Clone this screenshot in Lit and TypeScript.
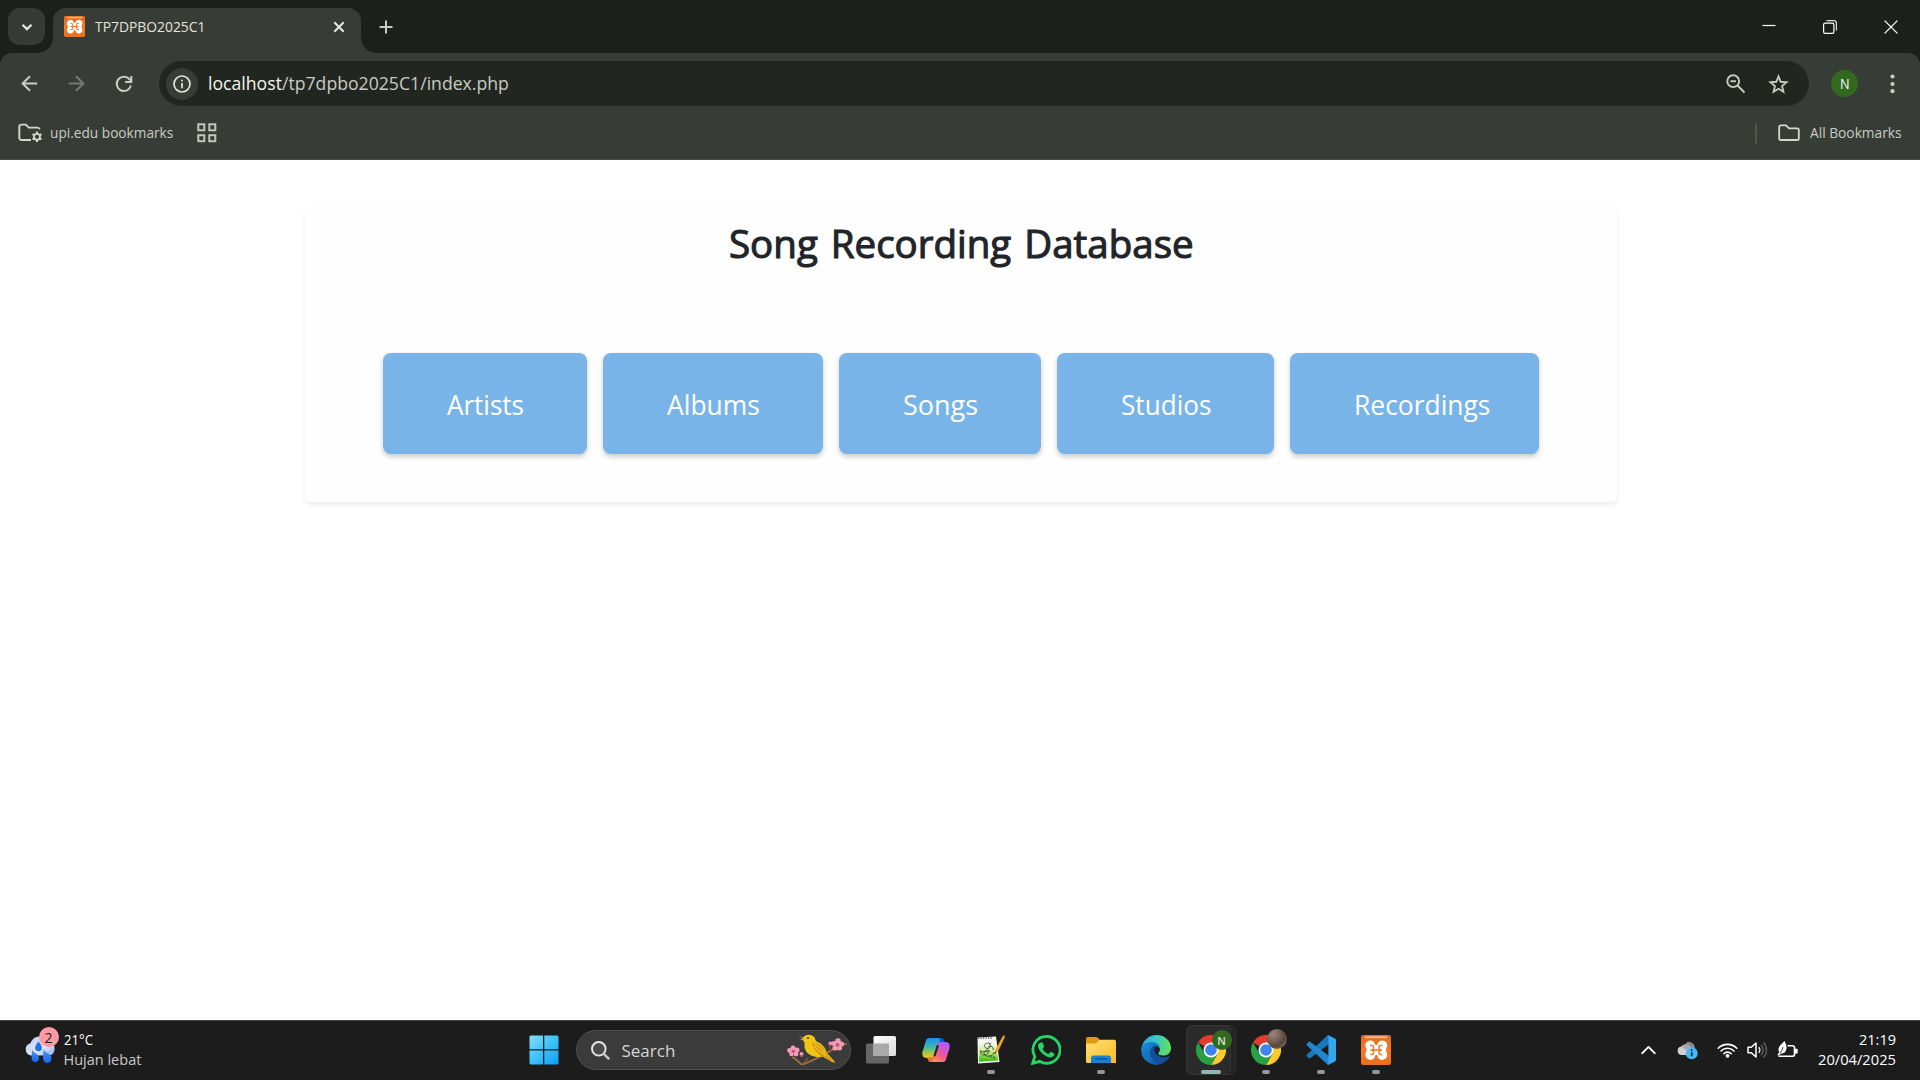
import { LitElement, html, svg, css } from "lit";
import { customElement, property } from "lit/decorators.js";

/* Single-line label condensed or widened to an exact text width. */
@customElement("fit-label")
class FitLabel extends LitElement {
  @property({ type: Number }) w = 0;
  static styles = css`
    :host { display: inline-block; flex: none; white-space: nowrap; overflow: visible; }
    .t { display: inline-block; transform-origin: 0 50%; white-space: nowrap; }
  `;
  async firstUpdated() {
    this.fit();
    await document.fonts.ready;
    this.fit();
  }
  fit() {
    const t = this.renderRoot.querySelector(".t") as HTMLElement;
    this.style.width = this.w + "px";
    t.style.transform = `scaleX(${this.w / t.offsetWidth})`;
  }
  render() {
    return html`<span class="t"><slot></slot></span>`;
  }
}

const icon = (w: number, h: number, body: unknown, vb = `0 0 ${w} ${h}`) =>
  html`<svg width=${w} height=${h} viewBox=${vb} fill="none">${body}</svg>`;

const xampp = (size: number) => icon(size, size, svg`
  <defs><linearGradient id="xo" x1="0" y1="0" x2="0" y2="1"><stop stop-color="#e0681c"/><stop offset=".5" stop-color="#f47b24"/><stop offset="1" stop-color="#e8701d"/></linearGradient></defs>
  <rect width="30" height="30" rx="2" fill="url(#xo)"/>
  <rect x="3.5" y="1.2" width="23" height="2" rx="1" fill="#f9b88a"/>
  <g stroke-linecap="round" stroke-linejoin="round">
    <path d="M9.200 10.300 11 15 9.200 20M21.300 10.300 19.500 15 21.300 20M11 15h8.500" stroke="#fff" stroke-width="9.800"/>
    <path d="M9.800 10.600h1.400q1.300 0 1.300 1.500v1.400q0 1.500-2.500 1.500 2.500 0 2.500 1.500v1.400q0 1.500-1.300 1.500H9.800M20.700 10.600h-1.400q-1.300 0-1.300 1.500v1.400q0 1.500 2.500 1.500-2.500 0-2.500 1.500v1.400q0 1.500 1.300 1.500h1.400M12.500 15H18" stroke="#f27a25" stroke-width="1.500"/>
  </g>`, "0 0 30 30");

const chrome = icon(30, 30, svg`
  <path d="M15 15 2 7.500A15 15 0 0 1 28 7.500Z" fill="#e33b2e"/>
  <path d="M15 7.500H28A15 15 0 0 1 15 30L21.500 18.750Z" fill="#fdc92c"/>
  <path d="M8.500 18.750 2 7.500A15 15 0 0 0 15 30L21.500 18.750 15 20Z" fill="#27a146"/>
  <circle cx="15" cy="15" r="7.500" fill="#fff"/><circle cx="15" cy="15" r="5.800" fill="#3f83ef"/>`);

const I = {
  chevDown: icon(12, 8, svg`<path d="m1.500 1.700 4.500 4.400 4.500-4.400" stroke="#e6e9e0" stroke-width="2.200"/>`),
  closeTab: icon(12, 12, svg`<path d="m1.300 1.300 9.400 9.400m0-9.400-9.400 9.400" stroke="#e6e9e0" stroke-width="2"/>`),
  plus: icon(14, 14, svg`<path d="M7 .5v13M.5 7h13" stroke="#c8cbc2" stroke-width="2"/>`),
  min: icon(14, 14, svg`<path d="M.5 5.500h13" stroke="#fff" stroke-width="1.200"/>`),
  restore: icon(14, 14, svg`<rect x=".6" y="3.100" width="10.300" height="10.300" rx="1.600" stroke="#fff" stroke-width="1.200"/><path d="M3.500.7h7.300a2.600 2.600 0 0 1 2.600 2.600v7.300" stroke="#dcdcdc" stroke-width="1.200"/>`),
  close: icon(14, 14, svg`<path d="m.6.600 12.800 12.800m0-12.800L.6 13.400" stroke="#fff" stroke-width="1.300"/>`),
  back: icon(17, 17, svg`<path d="M16.200 8.500H2M9 1.200 1.600 8.500 9 15.800" stroke="#c9ccc3" stroke-width="2"/>`),
  fwd: icon(17, 17, svg`<path d="M.8 8.500H15M8 1.200l7.400 7.300L8 15.800" stroke="#777a72" stroke-width="2"/>`),
  reload: icon(18, 18, svg`<path d="M15.900 10.600a7.200 7.200 0 1 1-1.300-6.200L16 5.900" stroke="#c9ccc3" stroke-width="2"/><path d="M16.300.9v6.200h-6.200" stroke="#c9ccc3" stroke-width="2"/>`),
  info: icon(18, 18, svg`<circle cx="9" cy="9" r="8" stroke="#e2e5dc" stroke-width="1.700"/><path d="M9 8v5.200M9 4.700v1.900" stroke="#e2e5dc" stroke-width="1.700"/>`),
  zoom: icon(20, 20, svg`<circle cx="7.200" cy="7.200" r="5.900" stroke="#c5c8bf" stroke-width="2"/><path d="m11.500 11.500 7 7M4.500 7.200h5.400" stroke="#c5c8bf" stroke-width="2"/>`),
  star: icon(21, 20, svg`<path d="m10.500 2.400 2.200 5.400 5.800.5-4.400 3.800 1.300 5.700-4.900-3-4.900 3 1.300-5.700-4.400-3.800 5.800-.5Z" stroke="#c5c8bf" stroke-width="1.900"/>`),
  dots: icon(5, 20, svg`<g fill="#c9ccc3"><circle cx="2.500" cy="2.500" r="2.100"/><circle cx="2.500" cy="10" r="2.100"/><circle cx="2.500" cy="17.200" r="2.100"/></g>`),
  folderGear: icon(25, 20, svg`<path d="M13 17H3.500A2.200 2.200 0 0 1 1.300 14.800V3.800c0-1.300.7-2.200 2.200-2.200h4.300l3 3h8.700c1.200 0 2 .6 2.200 1.800" stroke="#d4d7ce" stroke-width="1.900"/><circle cx="19" cy="13.800" r="3" stroke="#d4d7ce" stroke-width="1.800"/><path d="M19 8.600v2M19 17v2M14.500 11.200l1.700 1M21.800 15.400l1.700 1M14.500 16.400l1.700-1M21.800 12.200l1.700-1" stroke="#d4d7ce" stroke-width="2"/>`),
  apps: icon(20, 20, svg`<g stroke="#c3c6bd" stroke-width="2"><rect x="1.300" y="1.300" width="6" height="6"/><rect x="12.300" y="1.300" width="6" height="6"/><rect x="1.300" y="12.200" width="6" height="6"/><rect x="12.300" y="12.200" width="6" height="6"/></g>`),
  folder: icon(22, 18, svg`<path d="M3 1.300h5l3 3h8.200c1 0 1.600.6 1.600 1.600v8.500c0 1-.6 1.600-1.600 1.600H2.800c-1 0-1.600-.6-1.600-1.600V3c0-1 .6-1.700 1.800-1.700Z" stroke="#d4d7ce" stroke-width="1.800"/>`),
  weather: icon(32, 30, svg`
    <defs><linearGradient id="wc" x1="0" y1="0" x2="1" y2="1"><stop stop-color="#b9cdf0"/><stop offset=".6" stop-color="#dde8fb"/><stop offset="1" stop-color="#86a8e6"/></linearGradient>
    <linearGradient id="wd" x1="0" y1="0" x2="0" y2="1"><stop stop-color="#4a95ee"/><stop offset="1" stop-color="#1467f0"/></linearGradient></defs>
    <path d="M7 20.500a6.300 6.300 0 0 1-.6-12.300A10 10 0 0 1 24 5.500c4 .8 6.800 4 6.600 8 0 4.500-2.500 7-6 7Z" fill="url(#wc)"/>
    <path d="M14.500 6.500c2.500 3.200 3.300 4.800 3.300 6.400a3.300 3.300 0 0 1-6.600 0c0-1.600.8-3.200 3.300-6.400Z" fill="#2472dd"/>
    <path d="M8 14.500c.7 3.300 7 4 7 8.700 0 2.400-1.600 3.900-3.700 3.900S7.600 25.500 7.600 23.100Z" fill="url(#wd)"/>
    <path d="M19.500 14c1 3.800 8 4.600 8 9.500 0 2.700-1.800 4.500-4.200 4.500s-4.200-1.800-4.200-4.500Z" fill="url(#wd)"/>`),
  start: icon(30, 30, svg`
    <defs><linearGradient id="st" gradientUnits="userSpaceOnUse" x1="0" y1="0" x2="30" y2="30"><stop stop-color="#86dffb"/><stop offset=".5" stop-color="#3cc3fa"/><stop offset="1" stop-color="#0b9bf5"/></linearGradient></defs>
    <path d="M1.500.5H14v13.800H.5V1.500ZM15.300.5h13.200l1 1v12.800H15.300ZM.5 15.600H14v13.900H1.500l-1-1Zm14.800 0h14.200v12.900l-1 1H15.300Z" fill="url(#st)"/>`),
  search: icon(19, 19, svg`<circle cx="7.800" cy="7.800" r="6.800" stroke="#e6e6e6" stroke-width="1.900" fill="#4b4b4b"/><path d="m12.800 12.800 4.700 4.700" stroke="#c4c4c4" stroke-width="2.500" stroke-linecap="round"/>`),
  bird: icon(62, 32, svg`
    <path d="M5 23c5 2 7 6 10 7.500 6-1.500 14-6 22-10 8-4 14-9 23-11" stroke="#a8713f" stroke-width="1.700"/>
    <path d="m16 30 5-6M44 17l-2-7" stroke="#8c5a34" stroke-width="1.200"/>
    <path d="M17 4 11.500 2l4.500 3-4.300.4L17 6.500Z" fill="#9a9389"/>
    <path d="M15.500 5c1-5 9-6 12-1.500 1.200 2.200.8 3.500 3 4.500 5 2 8 6 9.500 11l8.500 9.500-3.500-.5-9-5.500c-7 1.500-14-.5-17-5.500-2.500-4-.7-7-2-9.500-.7-1.200-1.600-1.300-1.500-2.500Z" fill="#f2c414"/>
    <path d="M25 8.500c7 0 11.500 4 14 10.500l8 8.800c-5-1.500-9-3.500-12-5.500-5-2.500-9-8-10-13.800Z" fill="#d89b0a"/>
    <path d="M27 12c4 4 8 7 12 10M27 9.500c5 3 9 6 11 10" stroke="#f7dc55" stroke-width=".9"/>
    <circle cx="21" cy="4" r=".9" fill="#2d230c"/>
    <g fill="#f29cb8"><circle cx="6" cy="14" r="2.500"/><circle cx="2.600" cy="16.500" r="2.400"/><circle cx="4.500" cy="20" r="2.300"/><circle cx="9" cy="20" r="2.400"/><circle cx="10" cy="16" r="2.500"/><circle cx="51" cy="7" r="2.800"/><circle cx="54.500" cy="10" r="2.600"/><circle cx="52.500" cy="14" r="2.500"/><circle cx="48" cy="14" r="2.600"/><circle cx="47" cy="9.500" r="2.500"/><circle cx="14.500" cy="20" r="2"/><circle cx="43.500" cy="9.500" r="2"/></g>
    <g fill="#d34a78"><circle cx="6.500" cy="17.200" r="1.500"/><circle cx="50.600" cy="10.800" r="1.600"/><circle cx="14.500" cy="22" r="1.200"/><circle cx="43" cy="11" r="1"/></g>`),
  taskView: icon(30, 30, svg`
    <defs><linearGradient id="tv" x1="0" y1="0" x2="1" y2="1"><stop stop-color="#fff"/><stop offset="1" stop-color="#dadada"/></linearGradient></defs>
    <rect x="0" y="8.500" width="23" height="20" rx="1.500" fill="#666"/><rect x="7.500" y="1" width="22.500" height="20" rx="1.500" fill="url(#tv)"/><path d="M7.500 8.500H23V21H9a1.500 1.500 0 0 1-1.500-1.500Z" fill="#aaa"/>`),
  copilot: icon(30, 28, svg`
    <defs><linearGradient id="c1" x1="0" y1="0" x2="0" y2="1"><stop stop-color="#1f8fee"/><stop offset=".45" stop-color="#38b8b0"/><stop offset=".75" stop-color="#a8c83c"/><stop offset="1" stop-color="#f7c51e"/></linearGradient>
    <linearGradient id="c2" x1="0" y1="1" x2=".5" y2="0"><stop stop-color="#ff9a55"/><stop offset=".45" stop-color="#f4588c"/><stop offset="1" stop-color="#b25af5"/></linearGradient></defs>
    <path d="M15 2h5c2 0 2.600 1.200 3.200 3l1 3.300h-4.500c-2 0-3 .8-3.600 2.700L14 15Z" fill="#1d50cf"/>
    <path d="M8 2h9c1.800 0 2.200 1.300 1.700 2.800L14 19c-.7 2-1.700 2.900-3.700 2.900H5.500C1.500 21.900.6 18.700 1.700 15L4.500 6C5.300 3.400 6 2 8 2Z" fill="url(#c1)"/>
    <path d="M15 26H9.700c-1.700 0-2.300-.9-2.800-2.300l-.7-2.200h4c2 0 3.100-.9 3.700-2.800l2-6Z" fill="#ed6a45"/>
    <path d="M22 26h-9c-1.800 0-2.200-1.300-1.700-2.800L16 9c.7-2 1.700-2.900 3.700-2.900h4.800c4 0 4.900 3.200 3.800 6.900L25.500 22c-.8 2.600-1.500 4-3.500 4Z" fill="url(#c2)"/>
    <path d="m15.800 9-3.600 11.500 2.300-.5 3.500-10.500Z" fill="#20242c"/>`),
  npp: icon(30, 30, svg`
    <defs><linearGradient id="np" x1="0" y1="0" x2="0" y2="1"><stop stop-color="#f4f6f0"/><stop offset=".45" stop-color="#cdeb94"/><stop offset=".75" stop-color="#72d22c"/><stop offset="1" stop-color="#35b51c"/></linearGradient></defs>
    <path d="M1.500 2.500 20 1.500 23.500 27 2 28.500Z" fill="#f4f6f0"/><path d="m2.800 9 17-.8 2.400 17.300-19.100 1.300Z" fill="url(#np)"/>
    <path d="M2 3h15" stroke="#777" stroke-width="2" stroke-dasharray="1.200 1.300"/>
    <path d="M15 9c-5-3-9 2-5 4s6-3 3-4m-8 6c-2 5 4 7 7 3s-4-4-4 0 9 5 10-1m-6-5c3-2 6 0 5 3M5 17l9-1M14 20l2 3m2-2v3" stroke="#3c5f33" stroke-width="1"/>
    <path d="m18.500 19 1-4.500L27 .8l2 1-6.500 13.700Z" fill="#f0a71f"/><path d="M27 .8 28 0l1.300.8L29 1.800Z" fill="#d54d37"/><path d="m18.500 19 .5-2.500 1.500.8Z" fill="#412"/>`),
  whatsapp: icon(30, 30, svg`
    <path d="M15.300 1.500a13.300 13.300 0 0 0-11.500 20L1.700 28.300l7-2A13.400 13.400 0 1 0 15.300 1.500Z" stroke="#25d366" stroke-width="2.800"/>
    <path d="M10.600 7.500c.7 0 1 .1 1.300.8l1.100 2.700c.2.600 0 1-1.300 2.500-.2.300-.2.500 0 .8 1.300 2.200 2.900 3.700 5.300 4.700.4.200.6.100.9-.2l1.300-1.600c.3-.4.600-.4 1-.2l2.700 1.300c.5.300.6.400.5 1-.3 2-2.300 3.200-4 3.200-5 0-12.500-6.700-12.400-11.700 0-1.700 1.200-3.300 3.600-3.300Z" fill="#25d366"/>`),
  explorer: icon(30, 30, svg`
    <defs><linearGradient id="fe" x1="0" y1="0" x2="1" y2="1"><stop stop-color="#ffe07a"/><stop offset="1" stop-color="#fbb91d"/></linearGradient></defs>
    <path d="M0 4c0-1.200.8-2 2-2h8c1.500 0 2.300 1.300 3.500 2.500V10H0Z" fill="#e09a0b"/><path d="M0 8.500h10l3.500-3.700H28c1.200 0 2 .8 2 2V28H1.500A1.500 1.500 0 0 1 0 26.500Z" fill="url(#fe)"/>
    <path d="M5 28v-5c0-1.500 1-2.500 2.500-2.500h15c1.500 0 2.500 1 2.500 2.500v5Z" fill="#1583d8"/><path d="M9 24h12.500" stroke="#0a4c92" stroke-width="1.300"/>`),
  edge: icon(30, 30, svg`
    <defs><linearGradient id="e1" x1="0" y1=".3" x2="1" y2=".4"><stop stop-color="#2aa7e4"/><stop offset=".5" stop-color="#39c9c5"/><stop offset="1" stop-color="#68de53"/></linearGradient>
    <linearGradient id="e2" x1="0" y1="0" x2="1" y2="1"><stop stop-color="#1b8bd8"/><stop offset="1" stop-color="#0c56a4"/></linearGradient></defs>
    <path d="M1 11C3 4.500 8.500 0 15.500 0 24 0 30 6 30 13c0 4.800-3.400 7.800-7.500 7.800-3.200 0-5.400-1-5.400-2.300 0-1 1.600-1.400 1.600-4 0-3.800-3.500-6.500-8-6.500-4.200 0-8 2-10.500 6.500Z" fill="url(#e1)"/>
    <path d="M.3 13C2 9 6.200 7 10.500 7c4 0 7.300 2 8 5.200-4.500-2.500-9 .8-9 5.800 0 6 6 11.500 14 9.200A15 15 0 0 1 .3 13Z" fill="url(#e2)"/>
    <path d="M9.600 17c0-3.500 1.600-5.700 4.400-6.500-2 5 2 11.500 8.500 11.500 2.700 0 4.500-.8 5.700-1.200.6 0 .7.500.4 1A14 14 0 0 1 20 28.500c-6 1.300-10.400-4.500-10.400-11.500Z" fill="#124f9b"/>
    <path d="M18.700 14.500c0 2.600-1.600 3-1.600 4 0 1.300 2.200 2.300 5.400 2.300 2 0 4-.7 5.400-2v2l-.2.700C20 24 13 19.500 13.500 13.500c.5-3 5-2.500 5.200 1Z" fill="#1d2024"/>`),
  vscode: icon(30, 30, svg`
    <path d="M22 0 1 19.500a1.300 1.300 0 0 0 0 2l1.700 1.500c.5.500 1.100.5 1.700.1L29 4.500Z" fill="#1878bd"/>
    <path d="M22 30 1 10.500a1.300 1.300 0 0 1 0-2L2.700 7c.5-.5 1.100-.5 1.700-.1L29 25.500Z" fill="#2187cf"/>
    <path d="M21.800 0 29 3.400c.6.300 1 .9 1 1.600v20c0 .7-.4 1.300-1 1.600L21.800 30c-.6.200-1.100 0-1.500-.3.800.8 2.100.2 2.100-.9V1.200c0-1.100-1.300-1.700-2.100-.9.400-.4.900-.5 1.500-.3Z" fill="#33a8ef"/>`),
  chevUp: icon(15, 10, svg`<path d="m1.300 8.200 6.200-6.300 6.200 6.300" stroke="#fff" stroke-width="1.900" stroke-linecap="round" stroke-linejoin="round"/>`),
  cloud: icon(21, 19, svg`<path d="M9.500 1.500c4-1.500 8 1 8.300 5L16 13H6Z" fill="#8c8c8c"/><path d="M4.300 14a4.300 4.300 0 0 1 0-8.500c2.600-3 7-2.500 8.800.5L17 10v4Z" fill="#cfcfcf"/><path d="M5 5.500c2.500-3 6.500-2.500 8.300.8L8 9Z" fill="#a8a8a8"/><circle cx="14.700" cy="12.200" r="6" fill="#45b8f5"/><path d="M14.700 11v4.300M14.700 8.200v1.700" stroke="#0c2a3a" stroke-width="1.700"/>`),
  wifi: icon(21, 16, svg`<g stroke="#fff" stroke-width="1.600" stroke-linecap="round"><path d="M1.200 6.200a13.200 13.200 0 0 1 18.600 0M4 9a9.200 9.200 0 0 1 13 0M6.800 11.700a5.200 5.200 0 0 1 7.400 0"/></g><circle cx="10.500" cy="13.800" r="1.900" fill="#fff"/>`),
  speaker: icon(21, 18, svg`<path d="M1 6.200v5.600h3.300L9 16V2L4.300 6.200Z" stroke="#fff" stroke-width="1.500" stroke-linejoin="round"/><path d="M11.700 6.200a4 4 0 0 1 0 5.600" stroke="#fff" stroke-width="1.400"/><path d="M14 3.800a7.500 7.500 0 0 1 0 10.400M16.500 1.500a11 11 0 0 1 0 15" stroke="#5c5c5c" stroke-width="1.400"/>`),
  battery: icon(21, 18, svg`<path d="M10.500 4.700h5a2 2 0 0 1 2 2v6.600a2 2 0 0 1-2 2H1.500" stroke="#fff" stroke-width="1.600"/><path d="M18 7.800h1.700c.8 0 1 .5 1 1v2.600c0 .6-.3 1-1 1H18Z" fill="#fff"/><path d="M7.500 0c2 3.500 2.500 7 1.500 9.500-.8 2-2.300 3-4.500 3L1.500 14.500.3 14l2-3C-.2 7.500 3 4.500 7.500 0Z" fill="#fff"/><path d="M6 6c-.6 2.600-1.600 4.700-3 6.500" stroke="#1c1c1c" stroke-width=".8"/>`),
};

@customElement("app-root")
class AppRoot extends LitElement {
  static styles = css`
    :host { display: block; font-family: "Open Sans", "Noto Sans", sans-serif; font-size: 14.500px; }
    * { box-sizing: border-box; }
    svg { display: block; flex: none; }
    .screen { width: 1920px; height: 1080px; display: flex; flex-direction: column; background: #fff; overflow: hidden; }
    .strip { height: 53px; background: #1c201b; display: flex; padding-left: 8px; flex: none; }
    .tabsearch { width: 37px; height: 37px; margin: 8px 8px 0 0; border-radius: 12px; background: #373b35; display: grid; place-items: center; }
    .tab { position: relative; width: 308px; height: 45px; margin-top: 8px; border-radius: 13px 13px 0 0; background: #383c36; display: flex; align-items: center; padding: 0 16px 8px 11px; gap: 10px; color: #e2e5dc; }
    .tab fit-label { padding-bottom: 1px; }
    .tab::before, .tab::after { content: ""; position: absolute; bottom: 0; width: 15px; height: 15px; }
    .tab::before { left: -15px; background: radial-gradient(circle at 0 0, transparent 14.500px, #383c36 15px); }
    .tab::after { right: -15px; background: radial-gradient(circle at 100% 0, transparent 14.500px, #383c36 15px); }
    .push { margin-left: auto; }
    .newtab { padding: 19.500px 0 0 18px; }
    .controls { margin-left: auto; display: flex; gap: 47px; padding: 19.500px 22.500px 0 0; }
    .chromebg { background: #1c201b; flex: none; }
    .bars { height: 107px; background: #383c36; border-radius: 12px 12px 0 0; border-bottom: 1px solid #4b4947; }
    .toolbar { height: 61px; display: flex; align-items: center; padding-left: 21px; }
    .navs { display: flex; align-items: center; gap: 30px; width: 138px; flex: none; }
    .omni { flex: none; width: 1650px; height: 45px; border-radius: 23px; background: #222621; display: flex; align-items: center; padding: 0 20px 0 7px; color: #c7cac1; font-size: 18px; }
    .omni fit-label { padding-bottom: 1px; }
    .infoc { width: 32px; height: 32px; border-radius: 50%; background: #383c36; display: grid; place-items: center; margin-right: 10px; }
    .host { color: #f2f5ec; }
    .omniicons { margin-left: auto; display: flex; gap: 22px; }
    .avatar { flex: none; width: 27px; height: 27px; border-radius: 50%; background: #33691e; color: #fff; display: grid; place-items: center; font-size: 14px; margin: 0 31.500px 0 22px; }
    .books { height: 44px; display: flex; align-items: center; padding: 0 18px; color: #c9ccc3; padding-bottom: 6px; }
    .books fit-label { padding-bottom: 2px; }
    .books .a { margin-right: 7px; }
    .books .b { margin-left: 23px; }
    .books .all { margin-left: 10px; }
    .sep { width: 2.500px; height: 21px; background: #50554c; border-radius: 1px; margin: 0 21px 0 auto; }
    .page { flex: 1; min-height: 0; padding-top: 48px; }
    .card { width: 1312px; height: 294px; margin-left: 305px; border-radius: 5px; background: #fefefe; box-shadow: 0 2.500px 5px rgba(0, 0, 0, .075); display: flex; flex-direction: column; align-items: center; }
    .title { margin: 8px 0 0; height: 54px; line-height: 54px; font-size: 39px; font-weight: 400; -webkit-text-stroke: 1.100px #212529; color: #212529; word-spacing: 3px; }
    .menu { display: flex; gap: 16px; margin: 83px 0 0; padding: 0; list-style: none; }
    .item { height: 101px; background: #78b4e7; border-radius: 8px; box-shadow: 0 2.500px 5px rgba(0, 0, 0, .2); color: #fff; font-size: 27px; line-height: 103px; padding-left: 64px; }
    .taskbar { height: 60px; background: #1c1c1c; border-top: 1px solid #434443; display: flex; align-items: center; flex: none; color: #fff; padding-bottom: 1px; }
    .left { width: 517.500px; padding-left: 24px; display: flex; align-items: center; gap: 7.500px; }
    .weather { position: relative; width: 32px; height: 30px; }
    .badge { position: absolute; right: -2.500px; top: -8px; width: 20px; height: 20px; border-radius: 50%; background: #ff99a4; color: #1c1c1c; display: grid; place-items: center; font-size: 14px; }
    .lines { display: flex; flex-direction: column; line-height: 20px; }
    .dim { color: #c9c9c9; }
    .start { width: 53px; display: grid; place-items: center; }
    .search { width: 275px; height: 40px; margin: 0 5px; border-radius: 20px; border: 1px solid #505050; background: #3b3b3b; display: flex; align-items: center; padding: 0 1px 0 14px; color: #d6d6d6; font-size: 17px; }
    .search fit-label { margin-left: 12px; }
    .apps { display: flex; gap: 5px; }
    .app { position: relative; width: 50px; height: 50px; display: grid; place-items: center; border-radius: 6px; }
    .active { background: #2b2b2b; border: 1px solid #353535; }
    .stack { width: 50px; height: 50px; background: #242424; border: 1px solid #303030; border-radius: 6px; display: flex; }
    .stack .app { margin: -1px; width: 45px; padding-left: 5px; }
    .ind { position: absolute; bottom: 1px; left: 21px; width: 8px; height: 4px; border-radius: 2px; background: #979797; }
    .wide { left: 14px; width: 20px; bottom: 0; background: #93b7b1; }
    .pin { position: absolute; left: 25px; top: 4px; width: 20px; height: 20px; border-radius: 50%; background: #33691e; color: #d5e4d0; display: grid; place-items: center; font-size: 11px; font-weight: 600; }
    .photo { background: radial-gradient(circle at 30% 25%, #9a8579 0, #776358 35%, #55483f 60%, #76655a 80%); left: 26px; }
    .tray { margin-left: auto; display: flex; align-items: center; padding-right: 24px; }
    .t1 { margin-left: 21.500px; } .t2 { margin-left: 19px; } .t3 { margin-left: 9px; } .t4 { margin: 0 20px 0 9px; }
    .clock { align-items: flex-end; }
  `;

  menu = [
    { t: "Artists", w: 204, tw: 77 },
    { t: "Albums", w: 220, tw: 93 },
    { t: "Songs", w: 202, tw: 75 },
    { t: "Studios", w: 217, tw: 90 },
    { t: "Recordings", w: 249, tw: 136 },
  ];

  render() {
    const ind = html`<span class="ind"></span>`;
    return html`<div class="screen">
      <header class="strip">
        <div class="tabsearch">${I.chevDown}</div>
        <div class="tab">${xampp(21)}<fit-label w="110">TP7DPBO2025C1</fit-label><span class="push">${I.closeTab}</span></div>
        <div class="newtab">${I.plus}</div>
        <div class="controls">${I.min}${I.restore}${I.close}</div>
      </header>
      <div class="chromebg"><div class="bars">
        <div class="toolbar">
          <div class="navs">${I.back}${I.fwd}${I.reload}</div>
          <div class="omni">
            <span class="infoc">${I.info}</span>
            <fit-label w="301"><span class="host">localhost</span>/tp7dpbo2025C1/index.php</fit-label>
            <div class="omniicons">${I.zoom}${I.star}</div>
          </div>
          <div class="avatar"><fit-label w="10">N</fit-label></div>${I.dots}
        </div>
        <div class="books">
          <span class="a">${I.folderGear}</span><fit-label w="123.5">upi.edu bookmarks</fit-label>
          <span class="b">${I.apps}</span>
          <span class="sep"></span>${I.folder}<fit-label class="all" w="92">All Bookmarks</fit-label>
        </div>
      </div></div>
      <main class="page">
        <section class="card">
          <h1 class="title"><fit-label w="465">Song Recording Database</fit-label></h1>
          <ul class="menu">${this.menu.map(m => html`<li class="item" style="width:${m.w}px"><fit-label w=${m.tw}>${m.t}</fit-label></li>`)}</ul>
        </section>
      </main>
      <footer class="taskbar">
        <div class="left">
          <div class="weather">${I.weather}<span class="badge">2</span></div>
          <div class="lines"><fit-label w="29">21°C</fit-label><fit-label class="dim" w="78">Hujan lebat</fit-label></div>
        </div>
        <div class="start">${I.start}</div>
        <div class="search">${I.search}<fit-label w="54">Search</fit-label><span class="push">${I.bird}</span></div>
        <div class="apps">
          <div class="app">${I.taskView}</div>
          <div class="app">${I.copilot}</div>
          <div class="app">${I.npp}${ind}</div>
          <div class="app">${I.whatsapp}</div>
          <div class="app">${I.explorer}${ind}</div>
          <div class="app">${I.edge}</div>
          <div class="stack"><div class="app active">${chrome}<span class="pin">N</span><span class="ind wide"></span></div></div>
          <div class="app">${chrome}<span class="pin photo"></span>${ind}</div>
          <div class="app">${I.vscode}${ind}</div>
          <div class="app">${xampp(30)}${ind}</div>
        </div>
        <div class="tray">
          ${I.chevUp}
          <span class="t1">${I.cloud}</span>
          <span class="t2">${I.wifi}</span>
          <span class="t3">${I.speaker}</span>
          <span class="t4">${I.battery}</span>
          <div class="lines clock"><fit-label w="37">21:19</fit-label><fit-label w="78">20/04/2025</fit-label></div>
        </div>
      </footer>
    </div>`;
  }
}
